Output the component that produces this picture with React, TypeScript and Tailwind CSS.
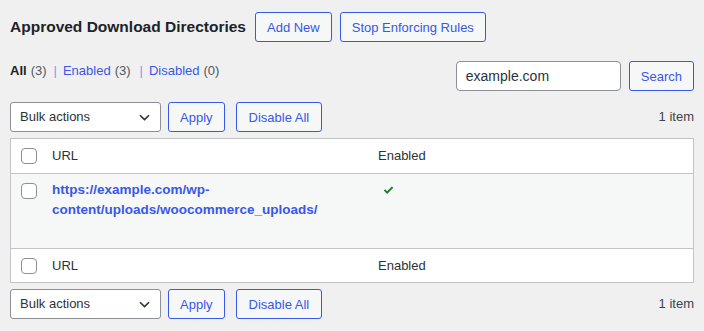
import React from "react";

const Checkbox: React.FC<{ className?: string }> = ({ className = "" }) => (
  <span className={`block w-[16px] h-[16px] rounded-[4px] border border-[#8c8f94] bg-white ${className}`}></span>
);

const Btn: React.FC<{ label: string; pad?: string }> = ({ label, pad = "px-[11px]" }) => (
  <button className={`h-[30px] ${pad} rounded-[3px] border border-[#3858e9] bg-[#f6f7f7] text-[13px] text-[#3858e9] leading-none`}>
    {label}
  </button>
);

const TableNav: React.FC = () => (
  <div className="flex items-center h-[30px]">
    <div className="flex items-center justify-between w-[151px] h-[30px] pl-[9px] pr-[10px] bg-white border border-[#8c8f94] rounded-[3px] text-[13px] text-[#2c3338]">
      <span>Bulk actions</span>
      <svg width="11" height="7" viewBox="0 0 11 7" fill="none">
        <path d="M1 1.2 L5.5 5.6 L10 1.2" stroke="#2c3338" strokeWidth="1.6" />
      </svg>
    </div>
    <div className="ml-[7px]">
      <Btn label="Apply" pad="px-[11px]" />
    </div>
    <div className="ml-[11px]">
      <Btn label="Disable All" pad="px-[12px]" />
    </div>
    <span className="ml-auto text-[13px] text-[#3c434a]">1 item</span>
  </div>
);

export default function App() {
  return (
    <div className="min-h-[331px] bg-[#f0f0f1] px-[10px] pt-[12px] font-['Liberation_Sans',Arial,sans-serif] text-[#3c434a]">
      <div className="flex items-center h-[30px]">
        <h1 className="text-[15.5px] font-bold text-[#1d2327] mr-[9px]">Approved Download Directories</h1>
        <div className="flex gap-[8px]">
          <Btn label="Add New" />
          <Btn label="Stop Enforcing Rules" />
        </div>
      </div>

      <div className="flex items-start justify-between mt-[19px]">
        <div className="flex items-center h-[20px] text-[13px]">
          <span className="font-bold text-[#1d2327]">All</span>
          <span className="ml-[4px] text-[#50575e]">(3)</span>
          <span className="ml-[7px] mr-[6px] text-[#8797ef]">|</span>
          <span className="text-[#3858e9]">Enabled</span>
          <span className="ml-[4px] text-[#50575e]">(3)</span>
          <span className="ml-[9px] mr-[6px] text-[#8797ef]">|</span>
          <span className="text-[#3858e9]">Disabled</span>
          <span className="ml-[4px] text-[#50575e]">(0)</span>
        </div>
        <div className="flex items-center">
          <div className="flex items-center w-[165px] h-[30px] px-[9px] bg-white border border-[#8c8f94] rounded-[4px] text-[14px] text-[#2c3338]">
            example.com
          </div>
          <div className="ml-[8px]">
            <Btn label="Search" />
          </div>
        </div>
      </div>

      <div className="mt-[11px]">
        <TableNav />
      </div>

      <div className="mt-[6px] bg-white border border-[#c3c4c7] text-[13px] text-[#2c3338]">
        <div className="flex items-center h-[35px] border-b border-[#c3c4c7]">
          <div className="w-[41px] pl-[10px]">
            <Checkbox />
          </div>
          <div className="w-[326px]">URL</div>
          <div className="flex-1">Enabled</div>
        </div>
        <div className="flex items-start h-[75px] pt-[6px] bg-[#f6f7f7] border-b border-[#c3c4c7]">
          <div className="w-[41px] pl-[10px] pt-[3px]">
            <Checkbox />
          </div>
          <div className="w-[326px] text-[13.5px] leading-[20px] font-bold text-[#3858e9]">
            https://example.com/wp-
            <br />
            content/uploads/woocommerce_uploads/
          </div>
          <div className="flex-1 pl-[5px] pt-[6px]">
            <svg width="11" height="9" viewBox="0 0 11 9">
              <path d="M0.8 4.6 L2.2 3.3 L4.1 5.2 L8.9 0.4 L10.3 1.7 L4.1 8 Z" fill="#1a7f2e" />
            </svg>
          </div>
        </div>
        <div className="flex items-center h-[33px]">
          <div className="w-[41px] pl-[10px]">
            <Checkbox />
          </div>
          <div className="w-[326px]">URL</div>
          <div className="flex-1">Enabled</div>
        </div>
      </div>

      <div className="mt-[6px]">
        <TableNav />
      </div>
    </div>
  );
}
